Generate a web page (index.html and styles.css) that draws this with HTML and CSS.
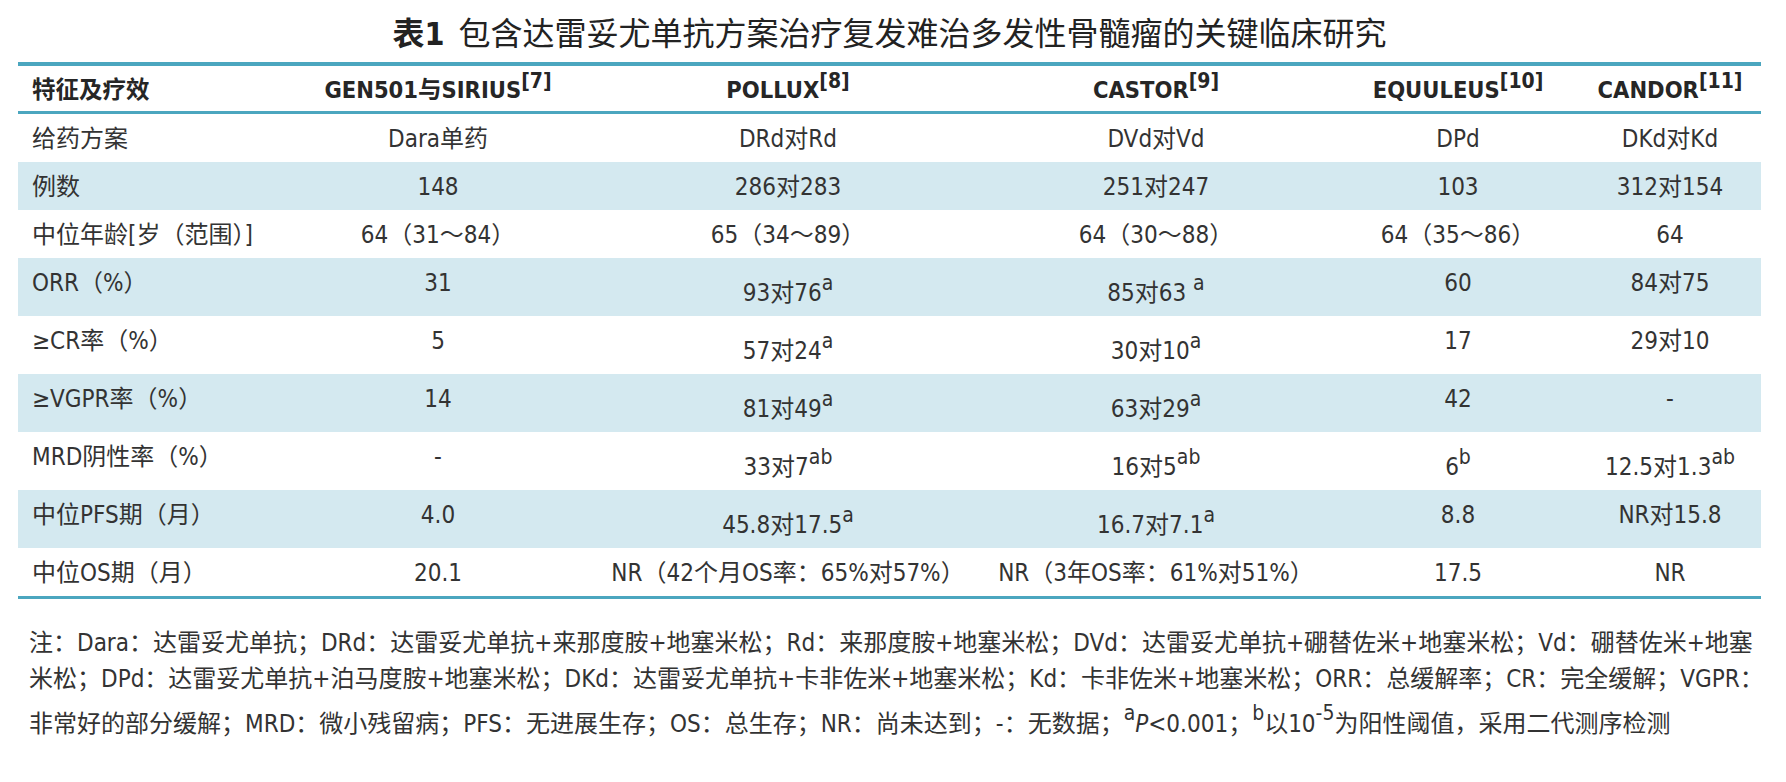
FILE: index.html
```html
<!DOCTYPE html>
<html lang="zh-CN">
<head>
<meta charset="utf-8">
<title>表1</title>
<link rel="stylesheet" href="styles.css">
</head>
<body>
<div class="page">
  <h1 class="title"><b class="tno">表1</b>包含达雷妥尤单抗方案治疗复发难治多发性骨髓瘤的关键临床研究</h1>
  <table class="data">
    <colgroup>
      <col class="c1"><col class="c2"><col class="c3"><col class="c4"><col class="c5"><col class="c6">
    </colgroup>
    <thead>
      <tr>
        <th class="lab">特征及疗效</th>
        <th>GEN501与SIRIUS<sup>[7]</sup></th>
        <th>POLLUX<sup>[8]</sup></th>
        <th>CASTOR<sup>[9]</sup></th>
        <th>EQUULEUS<sup>[10]</sup></th>
        <th>CANDOR<sup>[11]</sup></th>
      </tr>
    </thead>
    <tbody>
      <tr><td class="lab">给药方案</td><td>Dara单药</td><td>DRd对Rd</td><td>DVd对Vd</td><td>DPd</td><td>DKd对Kd</td></tr>
      <tr><td class="lab">例数</td><td>148</td><td>286对283</td><td>251对247</td><td>103</td><td>312对154</td></tr>
      <tr><td class="lab">中位年龄[岁（范围）]</td><td>64（31～84）</td><td>65（34～89）</td><td>64（30～88）</td><td>64（35～86）</td><td>64</td></tr>
      <tr><td class="lab">ORR（%）</td><td>31</td><td>93对76<sup>a</sup></td><td>85对63 <sup>a</sup></td><td>60</td><td>84对75</td></tr>
      <tr><td class="lab">≥CR率（%）</td><td>5</td><td>57对24<sup>a</sup></td><td>30对10<sup>a</sup></td><td>17</td><td>29对10</td></tr>
      <tr><td class="lab">≥VGPR率（%）</td><td>14</td><td>81对49<sup>a</sup></td><td>63对29<sup>a</sup></td><td>42</td><td>-</td></tr>
      <tr><td class="lab">MRD阴性率（%）</td><td>-</td><td>33对7<sup>ab</sup></td><td>16对5<sup>ab</sup></td><td>6<sup>b</sup></td><td>12.5对1.3<sup>ab</sup></td></tr>
      <tr><td class="lab">中位PFS期（月）</td><td>4.0</td><td>45.8对17.5<sup>a</sup></td><td>16.7对7.1<sup>a</sup></td><td>8.8</td><td>NR对15.8</td></tr>
      <tr><td class="lab">中位OS期（月）</td><td>20.1</td><td>NR（42个月OS率：65%对57%）</td><td>NR（3年OS率：61%对51%）</td><td>17.5</td><td>NR</td></tr>
    </tbody>
  </table>
  <p class="notes">注：Dara：达雷妥尤单抗；DRd：达雷妥尤单抗+来那度胺+地塞米松；Rd：来那度胺+地塞米松；DVd：达雷妥尤单抗+硼替佐米+地塞米松；Vd：硼替佐米+地塞<br>米松；DPd：达雷妥尤单抗+泊马度胺+地塞米松；DKd：达雷妥尤单抗+卡非佐米+地塞米松；Kd：卡非佐米+地塞米松；ORR：总缓解率；CR：完全缓解；VGPR：<br>非常好的部分缓解；MRD：微小残留病；PFS：无进展生存；OS：总生存；NR：尚未达到；-：无数据；<sup>a</sup><i>P</i>&lt;0.001；<sup>b</sup>以10<sup>-5</sup>为阳性阈值，采用二代测序检测</p>
</div>
</body>
</html>
```

FILE: styles.css
```css
* { box-sizing: border-box; }

body {
  margin: 0;
  background: #ffffff;
  color: #333333;
  font-family: "DejaVu Sans Condensed", "DejaVu Sans", "Noto Sans CJK SC", sans-serif;
  font-stretch: condensed;
}

.page {
  padding: 14px 25px 0 18px;
}

.title {
  margin: 0;
  height: 48px;
  font-size: 32px;
  line-height: 40px;
  font-weight: normal;
  text-align: center;
  color: #222222;
}

.tno {
  font-weight: bold;
  margin-right: 14px;
}

.data {
  width: 1743px;
  table-layout: fixed;
  border-collapse: separate;
  border-spacing: 0;
  font-size: 24px;
}

.c1 { width: 257px; }
.c2 { width: 326px; }
.c3 { width: 374px; }
.c4 { width: 362px; }
.c5 { width: 242px; }
.c6 { width: 182px; }

.data th {
  border-top: 4px solid #4ba6bf;
  border-bottom: 3px solid #4ba6bf;
  padding: 10px 0 7px;
  line-height: 28px;
  font-size: 23.5px;
  font-weight: bold;
  color: #262626;
  text-align: center;
  vertical-align: baseline;
  white-space: nowrap;
}

.data th sup {
  font-size: 21px;
  line-height: 0;
  vertical-align: 10px;
}

.data td {
  padding: 11px 0 9px;
  line-height: 28px;
  text-align: center;
  vertical-align: top;
  white-space: nowrap;
}

.data td sup {
  font-size: 21px;
  line-height: 28px;
  vertical-align: 11px;
}

.data .lab {
  text-align: left;
  padding-left: 14px;
}

.data tbody tr:nth-child(even) td {
  background: #d4e9f0;
}

.data tbody tr:last-child td {
  border-bottom: 3px solid #4ba6bf;
}

.notes {
  margin: 26px 0 0 11px;
  font-size: 24px;
  line-height: 36px;
  white-space: nowrap;
  color: #333333;
}

.notes sup {
  font-size: 21px;
  line-height: 32px;
  vertical-align: 12px;
}
```
